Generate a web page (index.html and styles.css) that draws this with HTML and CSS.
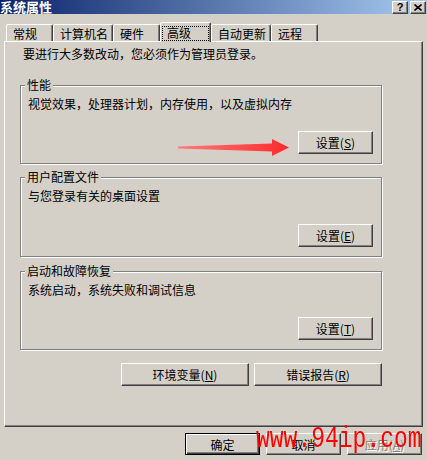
FILE: index.html
```html
<!DOCTYPE html>
<html lang="zh-CN">
<head>
<meta charset="utf-8">
<title>系统属性</title>
<link rel="stylesheet" href="styles.css">
</head>
<body>
<div class="window">
  <div class="titlebar">
    <span class="title">系统属性</span>
    <div class="tb-buttons">
      <span class="tb-btn help">?</span>
      <span class="tb-btn close">
        <svg width="8" height="7" viewBox="0 0 8 7"><path d="M0.5 0.5 L7.5 6.5 M7.5 0.5 L0.5 6.5" stroke="#000" stroke-width="1.6" fill="none"/></svg>
      </span>
    </div>
  </div>

  <div class="tabs">
    <div class="tab">常规</div>
    <div class="tab">计算机名</div>
    <div class="tab">硬件</div>
    <div class="tab active"><span class="focus">高级</span></div>
    <div class="tab">自动更新</div>
    <div class="tab">远程</div>
  </div>

  <div class="panel">
    <p class="intro">要进行大多数改动，您必须作为管理员登录。</p>

    <div class="group g1">
      <span class="legend">性能</span>
      <p class="desc">视觉效果，处理器计划，内存使用，以及虚拟内存</p>
      <button class="btn">设置(<u>S</u>)</button>
    </div>

    <div class="group g2">
      <span class="legend">用户配置文件</span>
      <p class="desc">与您登录有关的桌面设置</p>
      <button class="btn">设置(<u>E</u>)</button>
    </div>

    <div class="group g3">
      <span class="legend">启动和故障恢复</span>
      <p class="desc">系统启动，系统失败和调试信息</p>
      <button class="btn">设置(<u>T</u>)</button>
    </div>

    <div class="env-row">
      <button class="btn wide">环境变量(<u>N</u>)</button>
      <button class="btn wide">错误报告(<u>R</u>)</button>
    </div>
  </div>

  <div class="dialog-buttons">
    <button class="btn default">确定</button>
    <button class="btn">取消</button>
    <button class="btn disabled">应用(<u>A</u>)</button>
  </div>

  <svg class="arrow" width="427" height="460" viewBox="0 0 427 460">
    <defs>
      <linearGradient id="ag" x1="178" y1="0" x2="289" y2="0" gradientUnits="userSpaceOnUse">
        <stop offset="0" stop-color="#ff7a7a"/>
        <stop offset="1" stop-color="#ff2a2a"/>
      </linearGradient>
    </defs>
    <polygon points="178,146.5 272,143.5 272,139 289,147.5 272,156 272,151.5 178,148.5" fill="url(#ag)"/>
  </svg>

  <div class="watermark">www.94ip.com</div>
</div>
</body>
</html>
```

FILE: styles.css
```css
body {
  margin: 0;
  background: #d4d0c8;
  font: 12px "Noto Sans CJK SC", sans-serif;
  color: #000;
}

.window {
  position: relative;
  width: 427px;
  height: 460px;
  overflow: hidden;
  background: #d4d0c8;
}

.titlebar {
  height: 14px;
  display: flex;
  justify-content: space-between;
  align-items: flex-start;
  background: linear-gradient(to right, #0a246a, #a6caf0);
}

.title {
  color: #fff;
  font-weight: bold;
  font-size: 13px;
  line-height: 14px;
  height: 14px;
}

.tb-buttons {
  display: flex;
  gap: 2px;
  padding: 1px 1px 0 0;
}

.tb-btn {
  box-sizing: border-box;
  width: 16px;
  height: 13px;
  background: #d4d0c8;
  border: 1px solid;
  border-color: #fff #404040 #404040 #fff;
  box-shadow: inset -1px -1px #808080;
  display: flex;
  align-items: center;
  justify-content: center;
  font: bold 11px "Liberation Sans", sans-serif;
  line-height: 11px;
}

.tabs {
  position: relative;
  z-index: 1;
  display: flex;
  align-items: flex-end;
  height: 19px;
  margin-top: 8px;
  padding-left: 6px;
}

.tab {
  box-sizing: border-box;
  height: 17px;
  min-width: 47px;
  padding: 2px 4px 0 6px;
  line-height: 14px;
  border: 1px solid;
  border-bottom: none;
  border-color: #fff #404040 transparent #fff;
  border-radius: 2px 2px 0 0;
  box-shadow: inset -1px 0 #808080;
  background: #d4d0c8;
  white-space: nowrap;
}

.tab.active {
  height: 20px;
  min-width: 51px;
  margin-bottom: -1px;
  padding: 3px 1px 0 1px;
}

.focus {
  display: block;
  box-sizing: border-box;
  width: 47px;
  height: 15px;
  border: 1px dotted #000;
  padding-left: 4px;
  line-height: 12px;
}

.panel {
  box-sizing: border-box;
  width: 419px;
  height: 386px;
  margin-left: 4px;
  border: 1px solid;
  border-color: #fff #404040 #404040 #fff;
  box-shadow: inset -1px -1px #808080;
  padding: 5px 0 0 15px;
}

.intro {
  margin: 0 0 0 3px;
  height: 14px;
  line-height: 14px;
}

.group {
  position: relative;
  box-sizing: border-box;
  width: 362px;
  height: 79px;
  border: 1px solid #808080;
  box-shadow: inset 1px 1px #fff, 1px 1px #fff;
  padding: 11px 8px 9px 7px;
  display: flex;
  flex-direction: column;
}

.g1 { margin-top: 24px; }
.g2 { margin-top: 13px; height: 80px; }
.g3 { margin-top: 14px; }

.legend {
  position: absolute;
  top: -8px;
  left: 4px;
  padding: 0 2px;
  line-height: 14px;
  background: #d4d0c8;
}

.desc {
  margin: 0;
  line-height: 14px;
}

.group .btn {
  margin-top: auto;
  align-self: flex-end;
}

.btn {
  box-sizing: border-box;
  width: 75px;
  height: 23px;
  padding: 0;
  background: #d4d0c8;
  border: 1px solid;
  border-color: #fff #404040 #404040 #fff;
  box-shadow: inset -1px -1px #808080;
  font: 12px "Noto Sans CJK SC", sans-serif;
  line-height: 19px;
  color: #000;
}

.btn.wide { width: 128px; }

.env-row {
  display: flex;
  justify-content: flex-end;
  gap: 5px;
  width: 362px;
  margin-top: 13px;
}

.dialog-buttons {
  display: flex;
  justify-content: flex-end;
  gap: 6px;
  padding-right: 5px;
  margin-top: 6px;
}

.dialog-buttons .btn { height: 22px; }

.btn.default {
  border: 1px solid #000;
  box-shadow: inset 1px 1px #fff, inset -1px -1px #404040, inset -2px -2px #808080;
}

.btn.disabled {
  color: #808080;
  text-shadow: 1px 1px #fff;
}

.arrow {
  position: absolute;
  left: 0;
  top: 0;
  pointer-events: none;
}

.watermark {
  position: absolute;
  left: 256px;
  top: 432px;
  font: 23px "Liberation Mono", monospace;
  line-height: 23px;
  color: #ff0000;
  white-space: nowrap;
  transform: scaleY(1.3);
  transform-origin: 0 100%;
}
```
